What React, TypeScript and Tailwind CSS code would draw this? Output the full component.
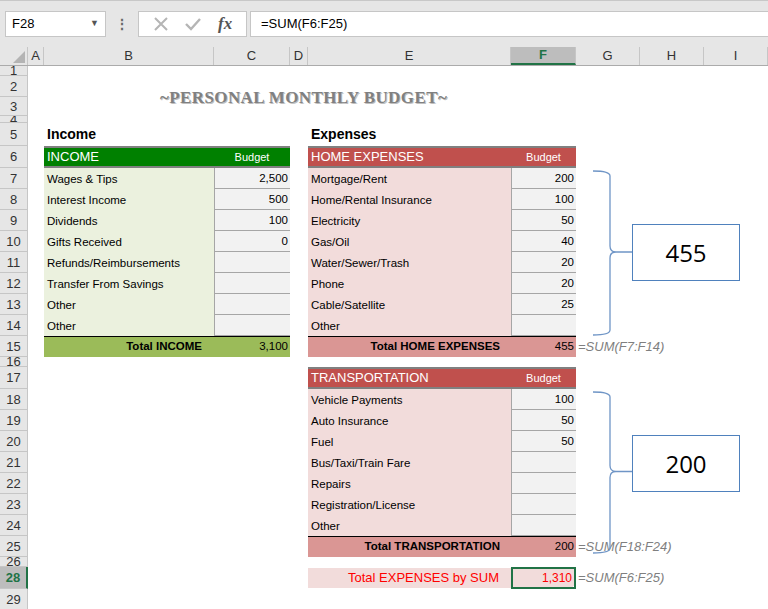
import React from "react";

const W = { h: 28, A: 16, B: 170, C: 76, D: 18, E: 203, F: 65, G: 64, H: 64, I: 64 };
type Col = keyof typeof W;
const cols: Col[] = ["A", "B", "C", "D", "E", "F", "G", "H", "I"];

type CellSpec = { cls?: string; content?: React.ReactNode };
type RowSpec = { n: string; h: number; cells?: Partial<Record<Col, CellSpec>>; sel?: boolean };

const inc = (label: string, val: string): Partial<Record<Col, CellSpec>> => ({
  B: { cls: "bg-[#ebf1de] pl-[3px] pt-[2px]", content: label },
  C: { cls: "bg-[#f2f2f2] border-l border-b border-[#a6a6a6] justify-end pr-[2px] pt-[2px]", content: val },
});
const exp = (label: string, val: string): Partial<Record<Col, CellSpec>> => ({
  E: { cls: "bg-[#f2dcdb] pl-[3px] pt-[2px]", content: label },
  F: { cls: "bg-[#f2f2f2] border-l border-b border-[#a6a6a6] justify-end pr-[2px] pt-[2px]", content: val },
});

const incomeRows: [string, string][] = [
  ["Wages & Tips", "2,500"], ["Interest Income", "500"], ["Dividends", "100"], ["Gifts Received", "0"],
  ["Refunds/Reimbursements", ""], ["Transfer From Savings", ""], ["Other", ""], ["Other", ""],
];
const homeRows: [string, string][] = [
  ["Mortgage/Rent", "200"], ["Home/Rental Insurance", "100"], ["Electricity", "50"], ["Gas/Oil", "40"],
  ["Water/Sewer/Trash", "20"], ["Phone", "20"], ["Cable/Satellite", "25"], ["Other", ""],
];
const transRows: [string, string][] = [
  ["Vehicle Payments", "100"], ["Auto Insurance", "50"], ["Fuel", "50"], ["Bus/Taxi/Train Fare", ""],
  ["Repairs", ""], ["Registration/License", ""], ["Other", ""],
];

const formula = (t: string) => (
  <span className="pl-[2px] italic text-[#7f7f7f] text-[13px] whitespace-nowrap">{t}</span>
);

const rows: RowSpec[] = [];
rows.push({ n: "1", h: 10 });
rows.push({ n: "2", h: 21 });
rows.push({ n: "3", h: 19 });
rows.push({ n: "4", h: 7 });
rows.push({
  n: "5", h: 23,
  cells: {
    B: { cls: "pl-[3px] items-end pb-[1px] font-bold text-[14px] text-black", content: "Income" },
    E: { cls: "pl-[3px] items-end pb-[1px] font-bold text-[14px] text-black", content: "Expenses" },
  },
});
rows.push({
  n: "6", h: 22,
  cells: {
    B: { cls: "bg-[#008000] text-white pl-[3px] text-[13px] border-y-2 border-[#808080]", content: "INCOME" },
    C: { cls: "bg-[#008000] text-white justify-center text-[11px] border-y-2 border-[#808080]", content: "Budget" },
    E: { cls: "bg-[#c0504d] text-white pl-[3px] text-[13px] border-y-2 border-[#808080]", content: "HOME EXPENSES" },
    F: { cls: "bg-[#c0504d] text-white justify-center text-[11px] border-y-2 border-[#808080]", content: "Budget" },
  },
});
for (let i = 0; i < 8; i++) {
  rows.push({ n: String(7 + i), h: 21, cells: { ...inc(incomeRows[i][0], incomeRows[i][1]), ...exp(homeRows[i][0], homeRows[i][1]) } });
}
rows.push({
  n: "15", h: 21,
  cells: {
    B: { cls: "bg-[#9bbb59] border-t border-black justify-end pr-[12px] font-semibold", content: "Total INCOME" },
    C: { cls: "bg-[#9bbb59] border-t border-black justify-end pr-[2px]", content: "3,100" },
    E: { cls: "bg-[#da9694] border-t border-black justify-end pr-[11px] font-semibold", content: "Total HOME EXPENSES" },
    F: { cls: "bg-[#da9694] border-t border-black justify-end pr-[2px]", content: "455" },
    G: { cls: "overflow-visible", content: formula("=SUM(F7:F14)") },
  },
});
rows.push({ n: "16", h: 10 });
rows.push({
  n: "17", h: 22,
  cells: {
    E: { cls: "bg-[#c0504d] text-white pl-[3px] text-[13px] border-y-2 border-[#808080]", content: "TRANSPORTATION" },
    F: { cls: "bg-[#c0504d] text-white justify-center text-[11px] border-y-2 border-[#808080]", content: "Budget" },
  },
});
for (let i = 0; i < 7; i++) {
  rows.push({ n: String(18 + i), h: 21, cells: exp(transRows[i][0], transRows[i][1]) });
}
rows.push({
  n: "25", h: 21,
  cells: {
    E: { cls: "bg-[#da9694] border-t border-black justify-end pr-[11px] font-semibold", content: "Total TRANSPORTATION" },
    F: { cls: "bg-[#da9694] border-t border-black justify-end pr-[2px]", content: "200" },
    G: { cls: "overflow-visible", content: formula("=SUM(F18:F24)") },
  },
});
rows.push({ n: "26", h: 10 });
rows.push({
  n: "28", h: 22, sel: true,
  cells: {
    E: { cls: "bg-[#f2dcdb] justify-end pr-[12px] text-[#ff0000] text-[13px] my-[1px]", content: "Total EXPENSES by SUM" },
    F: {
      cls: "bg-[#f2dcdb] justify-end pr-[2px] text-[#ff0000] text-[12px] border-2 border-[#217346] relative",
      content: (
        <>
          1,310
          <span className="absolute right-[-4px] bottom-[-4px] w-[5px] h-[5px] bg-[#217346] border border-white" />
        </>
      ),
    },
    G: { cls: "overflow-visible", content: formula("=SUM(F6:F25)") },
  },
});
rows.push({ n: "29", h: 21 });

function Brace({ top, height }: { top: number; height: number }) {
  const h = height;
  const m = h / 2;
  return (
    <svg className="absolute" style={{ left: 592, top }} width={40} height={h + 2} viewBox={`0 0 40 ${h + 2}`}>
      <path
        d={`M1 1 Q18 1 18 6 L18 ${m - 6} Q18 ${m} 24 ${m} L40 ${m} M24 ${m} Q18 ${m} 18 ${m + 6} L18 ${h - 4} Q18 ${h + 1} 1 ${h + 1}`}
        fill="none"
        stroke="#6f95c6"
        strokeWidth="1.3"
      />
    </svg>
  );
}

export default function App() {
  return (
    <div className="w-[768px] h-[609px] overflow-hidden bg-white relative text-[11.5px] text-black" style={{ fontFamily: '"Liberation Sans", Arial, sans-serif' }}>
      <div className="h-[47px] bg-[#e6e6e6] border-t border-[#c8c8c8] flex items-start pt-[10px] gap-0">
        <div className="ml-[5px] w-[101px] h-[26px] bg-white border border-[#c6c6c6] flex items-center justify-between px-[6px] text-[13px]">
          <span>F28</span>
          <span className="text-[#555] text-[9px]">▼</span>
        </div>
        <div className="w-[32px] h-[26px] flex items-center justify-center text-[#666] text-[14px] font-bold">⋮</div>
        <div className="w-[109px] h-[26px] bg-white border border-[#c6c6c6] flex items-center justify-around px-[6px]">
          <svg width="16" height="16" viewBox="0 0 16 16"><path d="M2 2L14 14M14 2L2 14" stroke="#b5b5b5" strokeWidth="2" /></svg>
          <svg width="18" height="16" viewBox="0 0 18 16"><path d="M2 8L7 13L16 3" stroke="#b5b5b5" strokeWidth="2.4" fill="none" /></svg>
          <span className="italic font-bold text-[17px] text-[#555]" style={{ fontFamily: '"Liberation Serif", serif' }}>fx</span>
        </div>
        <div className="ml-[3px] flex-1 h-[26px] bg-white border-y border-l border-[#c6c6c6] flex items-center pl-[10px] text-[13px]">=SUM(F6:F25)</div>
      </div>
      <div className="flex h-[19px] bg-[#e6e6e6] border-b border-[#ababab] text-[13px] text-[#333]">
        <div className="w-[28px] shrink-0 border-r border-[#c6c6c6] relative">
          <svg className="absolute right-[2px] bottom-[2px]" width="12" height="12"><path d="M12 0L12 12L0 12Z" fill="#b4b4b4" /></svg>
        </div>
        {cols.map((c) => (
          <div
            key={c}
            style={{ width: W[c] }}
            className={
              "shrink-0 flex items-center justify-center border-r border-[#c6c6c6] " +
              (c === "F" ? "bg-[#bdbdbd] text-[#217346] font-bold border-b-2 border-b-[#217346]" : "")
            }
          >
            {c}
          </div>
        ))}
      </div>
      {rows.map((r) => (
        <div key={r.n} className="flex" style={{ height: r.h }}>
          <div
            className={
              "w-[28px] shrink-0 border-r border-b border-[#c6c6c6] flex items-center justify-center overflow-hidden text-[13px] leading-none " +
              (r.sel ? "bg-[#bdbdbd] text-[#217346] font-bold border-r-2 border-r-[#217346]" : "bg-[#e6e6e6] text-[#333]")
            }
          >
            {r.n}
          </div>
          {cols.map((c) => {
            const cell = r.cells?.[c];
            return (
              <div
                key={c}
                style={{ width: W[c] }}
                className={"shrink-0 flex items-center whitespace-nowrap " + (cell?.cls ?? "") + (cell?.cls?.includes("overflow-visible") ? "" : " overflow-hidden")}
              >
                {cell?.content}
              </div>
            );
          })}
        </div>
      ))}
      <div
        className="absolute left-[160px] top-[85px] text-[17px] font-bold text-[#808080] tracking-[0.4px]"
        style={{ fontFamily: '"Liberation Serif", serif', textShadow: "1px 1px 0 #bfbfbf" }}
      >
        ~PERSONAL MONTHLY BUDGET~
      </div>
      <Brace top={170} height={164} />
      <Brace top={391} height={161} />
      <div className="absolute left-[632px] top-[224px] w-[108px] h-[57px] border border-[#4f81bd] bg-white flex items-center justify-center text-[24px]" style={{ fontFamily: '"Open Sans", sans-serif' }}>455</div>
      <div className="absolute left-[632px] top-[435px] w-[108px] h-[57px] border border-[#4f81bd] bg-white flex items-center justify-center text-[24px]" style={{ fontFamily: '"Open Sans", sans-serif' }}>200</div>
    </div>
  );
}
